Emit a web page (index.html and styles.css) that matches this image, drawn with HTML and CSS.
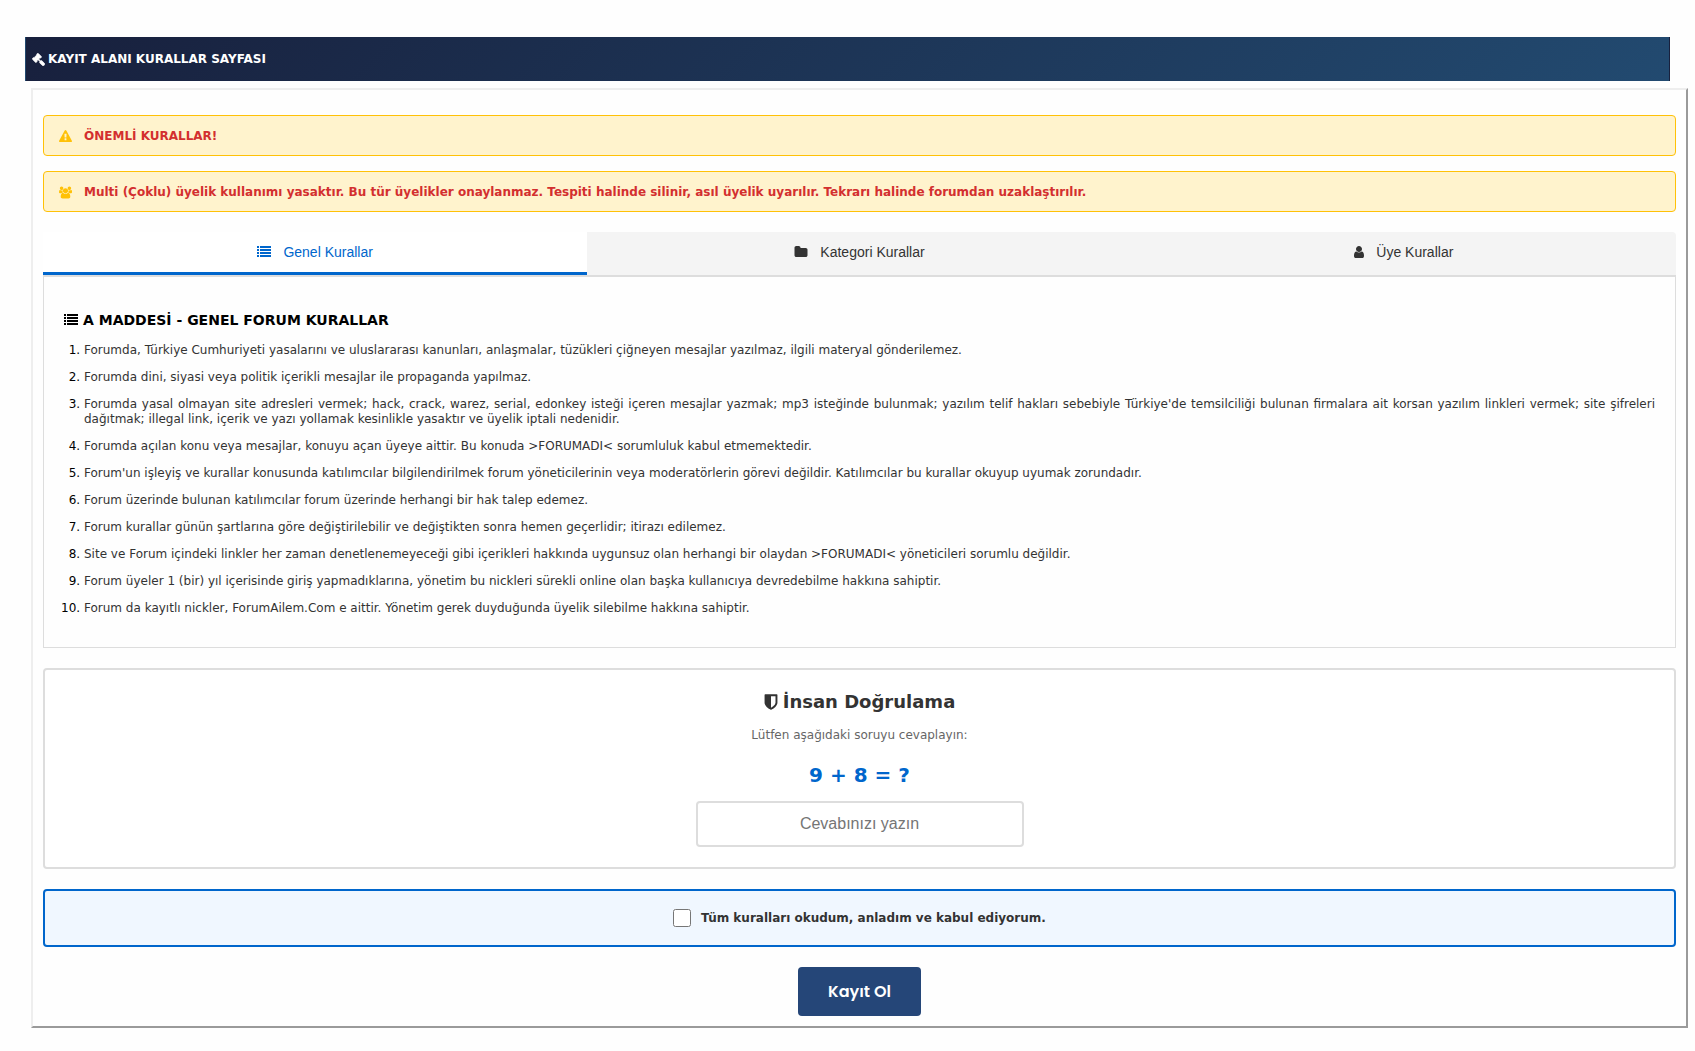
FILE: index.html
```
<!DOCTYPE html>
<html lang="tr">
<head>
  <meta charset="UTF-8" />
  <title>Kayıt Alanı Kurallar Sayfası</title>
  <meta name="viewport" content="width=device-width, initial-scale=1.0" />
  <link rel="stylesheet" href="styles.css">
</head>
<body>
  <h1 class="page-title">
    <svg class="icon" viewBox="0 0 1792 1792" aria-hidden="true"><path d="M1771 1536q0 53-37 90l-107 108q-39 37-91 37-53 0-90-37l-363-364q-38-36-38-90 0-53 43-96l-256-256-126 126q-14 14-34 14t-34-14q2 2 12.500 12t12.500 13 10 11.500 10 13.500 6 13.500 5.500 16.500 1.500 18q0 38-28 68-3 3-16.500 18t-19 20.500-18.500 16.500-22 15.500-22 9-26 4.500q-40 0-68-28l-408-408q-28-28-28-68 0-13 4.500-26t9-22 15.500-22 16.500-18.500 20.500-19 18-16.500q30-28 68-28 10 0 18 1.500t16.500 5.500 13.500 6 13.500 10 11.500 10 13 12.500 12 12.500q-14-14-14-34t14-34l348-348q14-14 34-14t34 14q-2-2-12.500-12t-12.500-13-10-11.500-10-13.500-6-13.500-5.500-16.500-1.500-18q0-38 28-68 3-3 16.500-18t19-20.500 18.500-16.500 22-15.500 22-9 26-4.500q40 0 68 28l408 408q28 28 28 68 0 13-4.500 26t-9 22-15.500 22-16.500 18.500-20.500 19-18 16.500q-30 28-68 28-10 0-18-1.500t-16.500-5.500-13.500-6-13.500-10-11.500-10-13-12.500-12-12.500q14 14 14 34t-14 34l-126 126 256 256q43-43 96-43 52 0 91 37l363 363q37 39 37 91z"/></svg>
    KAYIT ALANI KURALLAR SAYFASI
  </h1>

  <form class="container">
    <div class="alert">
      <svg class="icon" viewBox="0 0 1792 1792" aria-hidden="true"><path d="M1024 1375v-190q0-14-9.500-23.500t-22.500-9.500h-192q-13 0-22.500 9.500t-9.500 23.500v190q0 14 9.500 23.500t22.500 9.500h192q13 0 22.500-9.500t9.500-23.500zm-2-374l18-459q0-12-10-19-13-11-24-11h-220q-11 0-24 11-10 7-10 21l17 457q0 10 10 16.500t24 6.500h185q14 0 23.500-6.500t10.500-16.500zm-14-934l768 1408q35 63-2 126-17 29-46.500 46t-63.500 17h-1536q-34 0-63.500-17t-46.500-46q-37-63-2-126l768-1408q17-31 47-49t65-18 65 18 47 49z"/></svg>
      <span>ÖNEMLİ KURALLAR!</span>
    </div>
    <div class="alert">
      <svg class="icon" viewBox="64 0 1920 1792" aria-hidden="true"><path d="M657 896q-162 5-265 128h-134q-82 0-137-40.500t-55-118.500q0-353 124-353 6 0 43.500 21t97.500 42.500 119 21.500q67 0 133-23-5 37-5 66 0 159 93 256zm1071 637q0 120-73 189.500t-194 69.500h-874q-121 0-194-69.500t-73-189.500q0-53 3.500-103.500t14-109 26.500-108.500 43-97.500 62-81 85.500-53.500 111.500-20q10 0 43 21.500t73 48 107 48 135 21.500 135-21.500 107-48 73-48 43-21.500q61 0 111.500 20t85.500 53.500 62 81 43 97.500 26.500 108.500 14 109 3.500 103.500zm-1024-1277q0 106-75 181t-181 75-181-75-75-181 75-181 181-75 181 75 75 181zm704 384q0 159-112.500 271.500t-271.500 112.500-271.500-112.500-112.500-271.500 112.500-271.500 271.500-112.500 271.500 112.500 112.500 271.500zm576 225q0 78-55 118.500t-137 40.500h-134q-103-123-265-128 93-97 93-256 0-29-5-66 66 23 133 23 59 0 119-21.500t97.500-42.500 43.500-21q124 0 124 353zm-128-609q0 106-75 181t-181 75-181-75-75-181 75-181 181-75 181 75 75 181z"/></svg>
      <span>Multi (Çoklu) üyelik kullanımı yasaktır. Bu tür üyelikler onaylanmaz. Tespiti halinde silinir, asıl üyelik uyarılır. Tekrarı halinde forumdan uzaklaştırılır.</span>
    </div>

    <div class="tabs">
      <button type="button" class="tab active">
        <svg class="icon" viewBox="0 0 14 14" shape-rendering="crispEdges" aria-hidden="true"><path d="M0 1h2v2H0zM3 1h11v2H3zM0 4h2v2H0zM3 4h11v2H3zM0 7h2v2H0zM3 7h11v2H3zM0 10h2v2H0zM3 10h11v2H3z"/></svg>
        Genel Kurallar
      </button>
      <button type="button" class="tab">
        <svg class="icon" viewBox="0 0 1792 1792" aria-hidden="true"><path d="M1728 608v704q0 92-66 158t-158 66h-1216q-92 0-158-66t-66-158v-960q0-92 66-158t158-66h320q92 0 158 66t66 158v32h672q92 0 158 66t66 158z"/></svg>
        Kategori Kurallar
      </button>
      <button type="button" class="tab">
        <svg class="icon icon-user" viewBox="256 0 1280 1792" aria-hidden="true"><path d="M1536 1399q0 109-62.500 187t-150.500 78h-854q-88 0-150.500-78t-62.500-187q0-85 8.500-160.500t31.500-152 58.500-131 94-89 134.500-34.500q131 128 313 128t313-128q76 0 134.500 34.500t94 89 58.500 131 31.500 152 8.500 160.500zm-256-887q0 159-112.500 271.500t-271.500 112.500-271.500-112.500-112.500-271.500 112.500-271.500 271.500-112.500 271.500 112.500 112.500 271.500z"/></svg>
        Üye Kurallar
      </button>
    </div>

    <div class="tab-content">
      <h2>
        <svg class="icon" viewBox="0 0 14 14" shape-rendering="crispEdges" aria-hidden="true"><path d="M0 1h2v2H0zM3 1h11v2H3zM0 4h2v2H0zM3 4h11v2H3zM0 7h2v2H0zM3 7h11v2H3zM0 10h2v2H0zM3 10h11v2H3z"/></svg>
        A MADDESİ - GENEL FORUM KURALLAR
      </h2>
      <ol class="rules">
        <li>Forumda, Türkiye Cumhuriyeti yasalarını ve uluslararası kanunları, anlaşmalar, tüzükleri çiğneyen mesajlar yazılmaz, ilgili materyal gönderilemez.</li>
        <li>Forumda dini, siyasi veya politik içerikli mesajlar ile propaganda yapılmaz.</li>
        <li>Forumda yasal olmayan site adresleri vermek; hack, crack, warez, serial, edonkey isteği içeren mesajlar yazmak; mp3 isteğinde bulunmak; yazılım telif hakları sebebiyle Türkiye'de temsilciliği bulunan firmalara ait korsan yazılım linkleri vermek; site şifreleri dağıtmak; illegal link, içerik ve yazı yollamak kesinlikle yasaktır ve üyelik iptali nedenidir.</li>
        <li>Forumda açılan konu veya mesajlar, konuyu açan üyeye aittir. Bu konuda &gt;FORUMADI&lt; sorumluluk kabul etmemektedir.</li>
        <li>Forum'un işleyiş ve kurallar konusunda katılımcılar bilgilendirilmek forum yöneticilerinin veya moderatörlerin görevi değildir. Katılımcılar bu kurallar okuyup uyumak zorundadır.</li>
        <li>Forum üzerinde bulunan katılımcılar forum üzerinde herhangi bir hak talep edemez.</li>
        <li>Forum kurallar günün şartlarına göre değiştirilebilir ve değiştikten sonra hemen geçerlidir; itirazı edilemez.</li>
        <li>Site ve Forum içindeki linkler her zaman denetlenemeyeceği gibi içerikleri hakkında uygunsuz olan herhangi bir olaydan &gt;FORUMADI&lt; yöneticileri sorumlu değildir.</li>
        <li>Forum üyeler 1 (bir) yıl içerisinde giriş yapmadıklarına, yönetim bu nickleri sürekli online olan başka kullanıcıya devredebilme hakkına sahiptir.</li>
        <li>Forum da kayıtlı nickler, ForumAilem.Com e aittir. Yönetim gerek duyduğunda üyelik silebilme hakkına sahiptir.</li>
      </ol>
    </div>

    <div class="captcha">
      <h3>
        <svg class="icon" viewBox="256 0 1280 1792" aria-hidden="true"><path d="M1344 960v-640h-448v1137q119-63 213-137 235-184 235-360zm192-768v768q0 86-33.500 170.500t-83 150-118 127.500-126.500 103-121 77.500-89.500 49.500-42.500 20q-12 6-26 6t-26-6q-16-7-42.500-20t-89.500-49.500-121-77.500-126.500-103-118-127.500-83-150-33.500-170.500v-768q0-26 19-45t45-19h1152q26 0 45 19t19 45z"/></svg>
        İnsan Doğrulama
      </h3>
      <p>Lütfen aşağıdaki soruyu cevaplayın:</p>
      <label class="question" for="answer">9 + 8 = ?</label>
      <input type="text" id="answer" class="answer" placeholder="Cevabınızı yazın" autocomplete="off" />
    </div>

    <div class="accept">
      <input type="checkbox" id="accept" />
      <label for="accept">Tüm kuralları okudum, anladım ve kabul ediyorum.</label>
    </div>

    <button type="submit" class="register">Kayıt Ol</button>
  </form>
</body>
</html>
```

FILE: styles.css
```
* {
  box-sizing: border-box;
}

body {
  margin: 0;
  padding: 37px 0 20px;
  background: #fefefe;
  color: #333;
  font-family: Verdana, "DejaVu Sans", sans-serif;
  font-size: 12px;
  line-height: 15px;
}

h2, h3, p {
  margin: 0;
}

.icon {
  flex: none;
  width: 14px;
  height: 14px;
  fill: currentColor;
}

.page-title {
  display: flex;
  align-items: center;
  gap: 3px;
  margin: 0 25px 7px;
  padding: 15px 6px 14px;
  border: solid transparent;
  border-width: 0 1px;
  background: linear-gradient(135deg, #18203d, #224a70);
  color: #fff;
  font-size: 12px;
  line-height: 15px;
}

.page-title .icon {
  width: 13px;
  height: 13px;
  stroke: currentColor;
  stroke-width: 100px;
}

.container {
  margin: 0 7px 0 31px;
  padding: 25px 10px 10px;
  border: 2px solid;
  border-color: #eee #9a9a9a #9a9a9a #eee;
}

.alert {
  display: flex;
  align-items: center;
  gap: 12px;
  margin-bottom: 15px;
  padding: 13px 15px 11px;
  background: #fff3cd;
  border: 1px solid #ffc107;
  border-radius: 4px;
  color: #d32f2f;
  font-weight: bold;
}

.alert .icon {
  width: 13px;
  height: 13px;
  color: #ffc107;
}

/* tabs */
.tabs {
  display: flex;
  margin-top: 20px;
  border-bottom: 2px solid #ddd;
}

.tab {
  flex: 1;
  display: flex;
  align-items: center;
  justify-content: center;
  gap: 12px;
  padding: 12px 20px;
  background: #f4f4f4;
  border: none;
  border-bottom: 3px solid transparent;
  color: #333;
  font-family: Arial, "Liberation Sans", sans-serif;
  font-size: 14px;
  line-height: 16px;
  cursor: pointer;
}

.tab .icon-user {
  width: 10px;
}

.tab:last-child {
  border-radius: 0 4px 0 0;
}

.tab.active {
  background: #fff;
  border-bottom-color: #06c;
  color: #06c;
}

.tab-content {
  padding: 34px 20px 19px;
  border: 1px solid #ddd;
  border-top: none;
}

.tab-content h2 {
  display: flex;
  align-items: center;
  gap: 5px;
  margin-bottom: 14px;
  color: #000;
  font-size: 14px;
  line-height: 18px;
}

.rules {
  margin: 0;
  padding-left: 20px;
  text-align: justify;
}

.rules li {
  margin-bottom: 12px;
}

.rules li::marker {
  color: #000;
}

/* human check */
.captcha {
  display: flex;
  flex-direction: column;
  align-items: center;
  margin-top: 20px;
  padding: 21px 20px 20px;
  background: #fff;
  border: 2px solid #ddd;
  border-radius: 4px;
}

.captcha h3 {
  display: flex;
  align-items: center;
  gap: 5px;
  margin-bottom: 15px;
  font-size: 18px;
  line-height: 22px;
}

.captcha h3 .icon {
  height: 18px;
}

.captcha p {
  margin-bottom: 20px;
  color: #666;
}

.question {
  margin-bottom: 14px;
  color: #06c;
  font-size: 20px;
  font-weight: bold;
  line-height: 24px;
}

.answer {
  width: 328px;
  max-width: 100%;
  padding: 12px;
  background: #fff;
  border: 2px solid #ddd;
  border-radius: 4px;
  font-family: Arial, "Liberation Sans", sans-serif;
  font-size: 16px;
  line-height: 18px;
  text-align: center;
}

.accept {
  display: flex;
  align-items: center;
  justify-content: center;
  gap: 10px;
  margin: 20px 0;
  padding: 18px;
  background: #f0f7ff;
  border: 2px solid #06c;
  border-radius: 4px;
  font-weight: bold;
}

.accept input {
  width: 18px;
  height: 18px;
  margin: 0;
}

.register {
  display: block;
  margin: 0 auto;
  padding: 15px 30px;
  background: #254678;
  border: none;
  border-radius: 4px;
  color: #fff;
  font-family: Poppins, Lato, sans-serif;
  font-size: 16px;
  font-weight: 600;
  line-height: 19px;
  cursor: pointer;
}
```
